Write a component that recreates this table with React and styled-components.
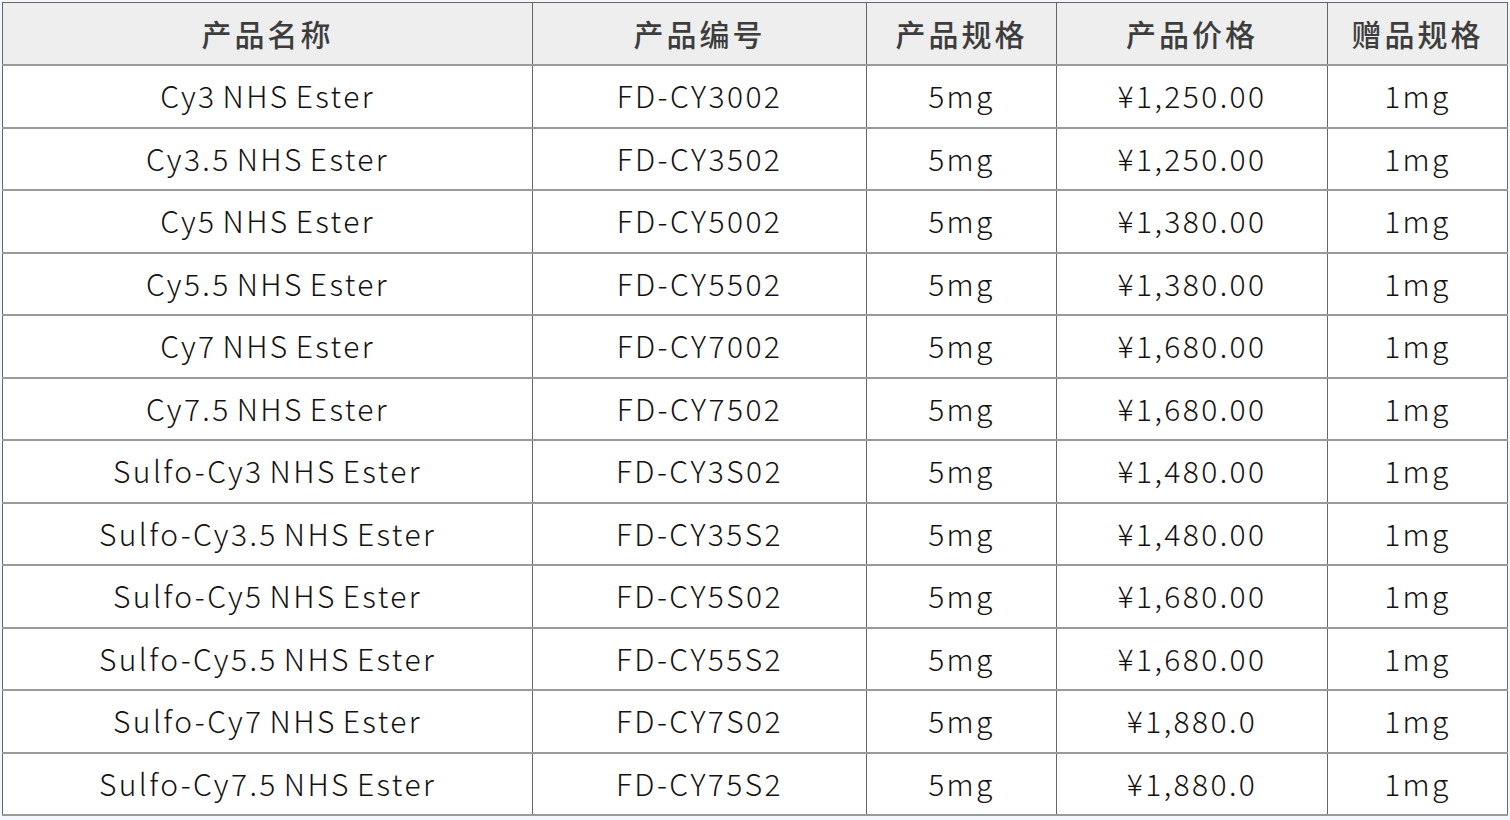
import React from "react";
import styled, { createGlobalStyle } from "styled-components";

const GlobalStyle = createGlobalStyle`
  html, body {
    margin: 0;
    padding: 0;
    background: #f3f6fa;
  }
  body {
    font-family: "Noto Sans CJK SC", "Noto Sans", sans-serif;
  }
`;

const Wrap = styled.div`
  padding: 2px 0 0 2px;
`;

const Table = styled.table`
  border-collapse: collapse;
  table-layout: fixed;
  width: 1505px;
  background: #fff;
  border: 1.5px solid #666;
`;

const HeadCell = styled.th`
  height: 59px;
  padding: 0 0 2px;
  background: #eeeeee;
  color: #3d3d3d;
  font-size: 30px;
  font-weight: 500;
  letter-spacing: 3px;
  text-align: center;
  border-left: 1.5px solid #666;
  border-bottom: 2px solid #9a9a9a;
`;

const Cell = styled.td`
  height: 58.5px;
  padding: 0 0 2px;
  color: #151213;
  font-size: 30px;
  font-weight: 300;
  letter-spacing: 2.4px;
  word-spacing: -3px;
  text-align: center;
  border-left: 1.5px solid #666;
  border-bottom: 2px solid #9a9a9a;
`;

const columns = [
  { title: "产品名称", width: 530 },
  { title: "产品编号", width: 334 },
  { title: "产品规格", width: 190 },
  { title: "产品价格", width: 271 },
  { title: "赠品规格", width: 180 },
];

const rows = [
  ["Cy3 NHS Ester", "FD-CY3002", "¥1,250.00"],
  ["Cy3.5 NHS Ester", "FD-CY3502", "¥1,250.00"],
  ["Cy5 NHS Ester", "FD-CY5002", "¥1,380.00"],
  ["Cy5.5 NHS Ester", "FD-CY5502", "¥1,380.00"],
  ["Cy7 NHS Ester", "FD-CY7002", "¥1,680.00"],
  ["Cy7.5 NHS Ester", "FD-CY7502", "¥1,680.00"],
  ["Sulfo-Cy3 NHS Ester", "FD-CY3S02", "¥1,480.00"],
  ["Sulfo-Cy3.5 NHS Ester", "FD-CY35S2", "¥1,480.00"],
  ["Sulfo-Cy5 NHS Ester", "FD-CY5S02", "¥1,680.00"],
  ["Sulfo-Cy5.5 NHS Ester", "FD-CY55S2", "¥1,680.00"],
  ["Sulfo-Cy7 NHS Ester", "FD-CY7S02", "¥1,880.0"],
  ["Sulfo-Cy7.5 NHS Ester", "FD-CY75S2", "¥1,880.0"],
];

const App = () => {
  return (
    <>
      <GlobalStyle />
      <Wrap>
        <Table>
          <colgroup>
            {columns.map((c) => (
              <col key={c.title} style={{ width: c.width }} />
            ))}
          </colgroup>
          <thead>
            <tr>
              {columns.map((c) => (
                <HeadCell key={c.title}>{c.title}</HeadCell>
              ))}
            </tr>
          </thead>
          <tbody>
            {rows.map(([name, code, price]) => (
              <tr key={code}>
                <Cell>{name}</Cell>
                <Cell>{code}</Cell>
                <Cell>5mg</Cell>
                <Cell>{price}</Cell>
                <Cell>1mg</Cell>
              </tr>
            ))}
          </tbody>
        </Table>
      </Wrap>
    </>
  );
};

export default App;
